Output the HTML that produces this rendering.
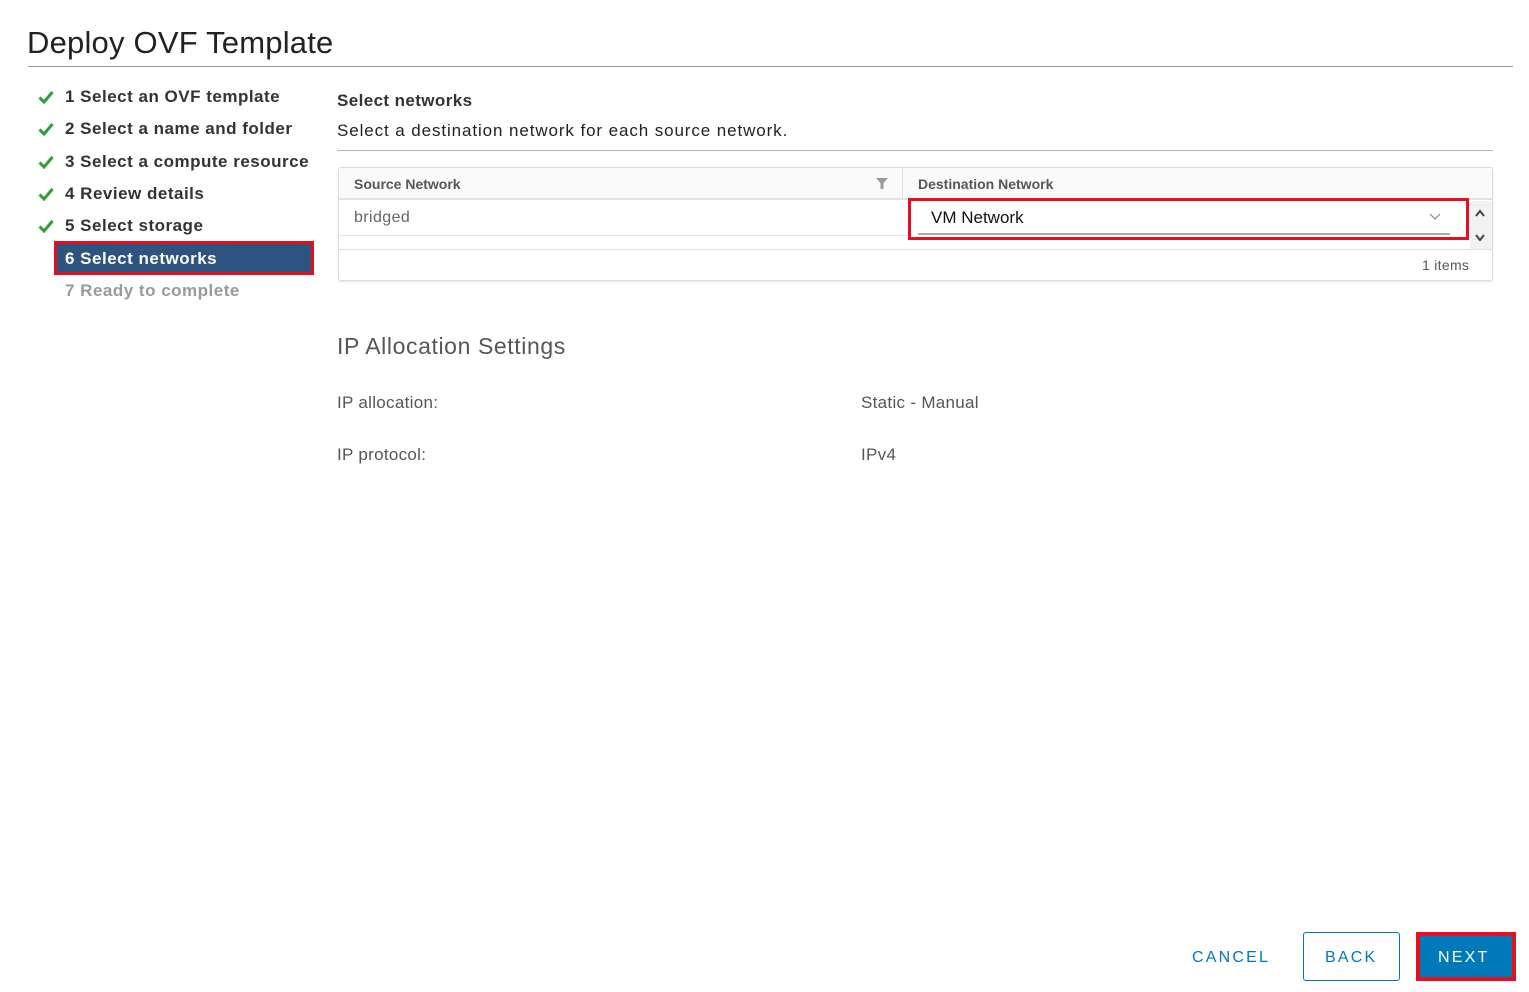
<!DOCTYPE html>
<html><head><meta charset="utf-8"><style>
*{margin:0;padding:0;box-sizing:border-box}
body{width:1529px;height:992px;background:#fff;font-family:"Liberation Sans",sans-serif;color:#333;position:relative;overflow:hidden}
.a{position:absolute;white-space:nowrap}
.step{position:absolute;left:65px;font-size:17px;font-weight:bold;color:#333;line-height:20px;letter-spacing:0.5px}
.chk{position:absolute;left:38px}
</style></head><body>
<div class="a" style="left:27px;top:25px;font-size:31px;color:#222;letter-spacing:0.2px">Deploy OVF Template</div>
<div class="a" style="left:28px;top:66px;width:1485px;height:1px;background:#9a9a9a"></div>

<svg class="chk" style="top:90px" width="16" height="14" viewBox="0 0 16 14"><path d="M1.5 7.5l4.5 4.5 8.5-10" fill="none" stroke="#2f9e3a" stroke-width="3"/></svg>
<svg class="chk" style="top:122px" width="16" height="14" viewBox="0 0 16 14"><path d="M1.5 7.5l4.5 4.5 8.5-10" fill="none" stroke="#2f9e3a" stroke-width="3"/></svg>
<svg class="chk" style="top:155px" width="16" height="14" viewBox="0 0 16 14"><path d="M1.5 7.5l4.5 4.5 8.5-10" fill="none" stroke="#2f9e3a" stroke-width="3"/></svg>
<svg class="chk" style="top:187px" width="16" height="14" viewBox="0 0 16 14"><path d="M1.5 7.5l4.5 4.5 8.5-10" fill="none" stroke="#2f9e3a" stroke-width="3"/></svg>
<svg class="chk" style="top:219px" width="16" height="14" viewBox="0 0 16 14"><path d="M1.5 7.5l4.5 4.5 8.5-10" fill="none" stroke="#2f9e3a" stroke-width="3"/></svg>

<div class="step" style="top:87px">1 Select an OVF template</div>
<div class="step" style="top:119px">2 Select a name and folder</div>
<div class="step" style="top:152px">3 Select a compute resource</div>
<div class="step" style="top:184px">4 Review details</div>
<div class="step" style="top:216px">5 Select storage</div>
<div class="a" style="left:54px;top:241px;width:260px;height:34px;border:3px solid #e3101e;background:#2d5380"></div>
<div class="step" style="top:249px;color:#fff">6 Select networks</div>
<div class="step" style="top:281px;color:#9a9a9a">7 Ready to complete</div>

<div class="a" style="left:337px;top:91px;font-size:17px;font-weight:bold;color:#333;letter-spacing:0.4px">Select networks</div>
<div class="a" style="left:337px;top:121px;font-size:17px;color:#222;letter-spacing:0.9px">Select a destination network for each source network.</div>
<div class="a" style="left:337px;top:150px;width:1156px;height:1px;background:#b5b5b5"></div>

<div class="a" style="left:338px;top:167px;width:1155px;height:114px;border:1px solid #ddd;border-radius:3px;box-shadow:0 1px 2px #e5e5e5"></div>
<div class="a" style="left:339px;top:168px;width:1153px;height:32px;background:#fafafa;border-bottom:2px solid #e3e3e3"></div>
<div class="a" style="left:902px;top:168px;width:1px;height:32px;background:#e3e3e3"></div>
<div class="a" style="left:354px;top:176px;font-size:14px;font-weight:bold;color:#565656">Source Network</div>
<svg class="a" style="left:876px;top:178px" width="12" height="11" viewBox="0 0 12 11"><path d="M0 0h12L7.5 5v6h-3V5z" fill="#9a9a9a"/></svg>
<div class="a" style="left:918px;top:176px;font-size:14px;font-weight:bold;color:#565656">Destination Network</div>
<div class="a" style="left:354px;top:209px;font-size:16px;color:#666;letter-spacing:0.4px">bridged</div>
<div class="a" style="left:339px;top:235px;width:1131px;height:1px;background:#e3e3e3"></div>
<div class="a" style="left:1470px;top:201px;width:22px;height:48px;background:#f2f2f2"></div>
<svg class="a" style="left:1474px;top:206px" width="12" height="38" viewBox="0 0 12 38"><path d="M2 10l4-5 4 5M2 29l4 5 4-5" fill="none" stroke="#444" stroke-width="2"/></svg>
<div class="a" style="left:339px;top:249px;width:1153px;height:1px;background:#ddd"></div>
<div class="a" style="left:1422px;top:257px;font-size:14px;color:#565656;letter-spacing:0.3px">1 items</div>

<div class="a" style="left:908px;top:198px;width:561px;height:42px;border:3px solid #e3101e;background:#fff"></div>
<div class="a" style="left:918px;top:233px;width:532px;height:2px;background:#aaa"></div>
<div class="a" style="left:931px;top:208px;font-size:17px;color:#111">VM Network</div>
<svg class="a" style="left:1429px;top:213px" width="12" height="8" viewBox="0 0 12 8"><path d="M1 1l5 5 5-5" fill="none" stroke="#888" stroke-width="1.2"/></svg>

<div class="a" style="left:337px;top:333px;font-size:23px;color:#565656;letter-spacing:0.6px">IP Allocation Settings</div>
<div class="a" style="left:337px;top:393px;font-size:17px;color:#565656;letter-spacing:0.3px">IP allocation:</div>
<div class="a" style="left:861px;top:393px;font-size:17px;color:#565656;letter-spacing:0.3px">Static - Manual</div>
<div class="a" style="left:337px;top:445px;font-size:17px;color:#565656;letter-spacing:0.3px">IP protocol:</div>
<div class="a" style="left:861px;top:445px;font-size:17px;color:#565656;letter-spacing:0.3px">IPv4</div>

<div class="a" style="left:1192px;top:949px;font-size:16px;letter-spacing:2.2px;color:#0079b8">CANCEL</div>
<div class="a" style="left:1303px;top:932px;width:97px;height:49px;border:1px solid #0079b8;border-radius:3px"></div>
<div class="a" style="left:1325px;top:949px;font-size:16px;letter-spacing:2.2px;color:#0079b8">BACK</div>
<div class="a" style="left:1416px;top:932px;width:100px;height:49px;border:4px solid #e3101e;background:#0079b8"></div>
<div class="a" style="left:1438px;top:949px;font-size:16px;letter-spacing:2.2px;color:#fff">NEXT</div>
</body></html>
